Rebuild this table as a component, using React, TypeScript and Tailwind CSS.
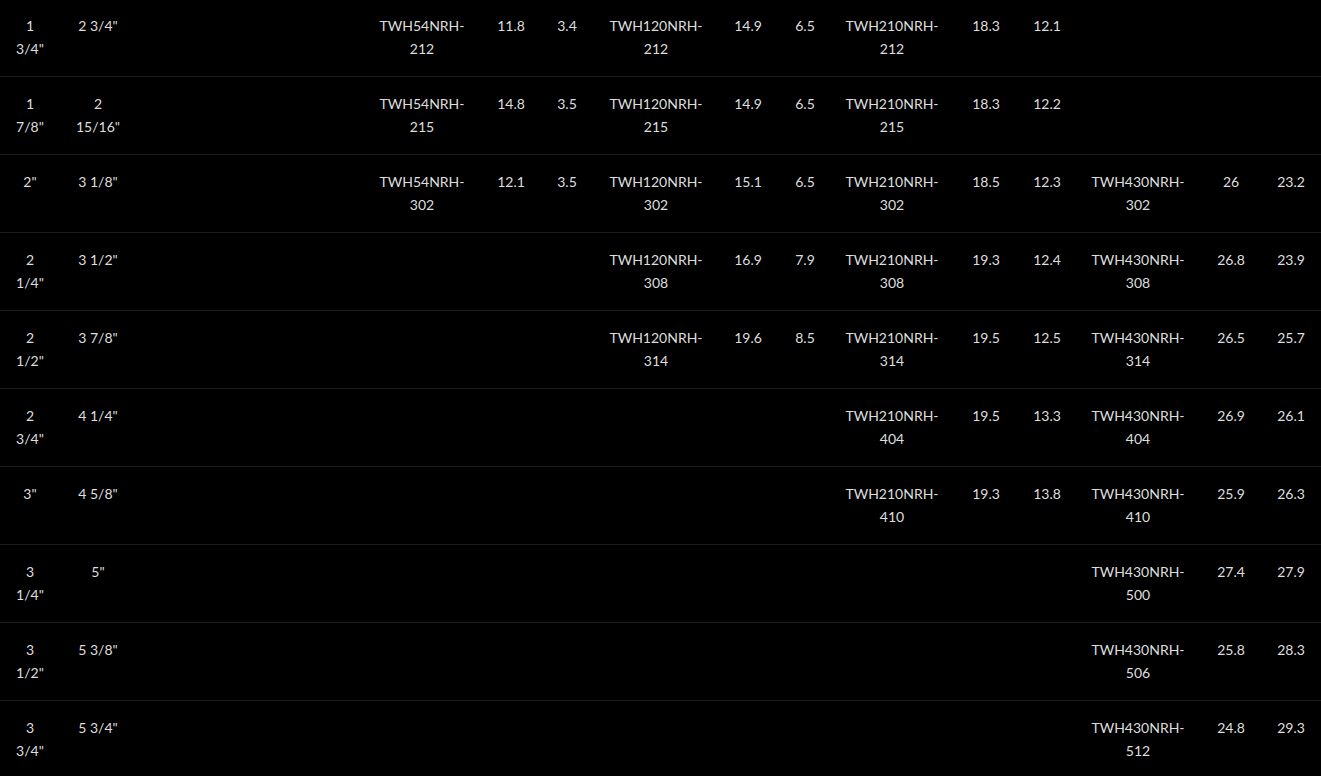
import React from "react";

type Row = string[];

const colClasses = [
  "w-[60px]",
  "w-[76px]",
  "w-[75px]",
  "w-[75px]",
  "w-[75px]",
  "w-[122px]",
  "w-[56px]",
  "w-[56px]",
  "w-[122px]",
  "w-[62px]",
  "w-[52px]",
  "w-[122px]",
  "w-[66px]",
  "w-[56px]",
  "w-[126px]",
  "w-[60px]",
  "w-[60px]",
];

const rows: Row[] = [
  ["1\n3/4\"", "2 3/4\"", "", "", "", "TWH54NRH-\n212", "11.8", "3.4", "TWH120NRH-\n212", "14.9", "6.5", "TWH210NRH-\n212", "18.3", "12.1", "", "", ""],
  ["1\n7/8\"", "2\n15/16\"", "", "", "", "TWH54NRH-\n215", "14.8", "3.5", "TWH120NRH-\n215", "14.9", "6.5", "TWH210NRH-\n215", "18.3", "12.2", "", "", ""],
  ["2\"", "3 1/8\"", "", "", "", "TWH54NRH-\n302", "12.1", "3.5", "TWH120NRH-\n302", "15.1", "6.5", "TWH210NRH-\n302", "18.5", "12.3", "TWH430NRH-\n302", "26", "23.2"],
  ["2\n1/4\"", "3 1/2\"", "", "", "", "", "", "", "TWH120NRH-\n308", "16.9", "7.9", "TWH210NRH-\n308", "19.3", "12.4", "TWH430NRH-\n308", "26.8", "23.9"],
  ["2\n1/2\"", "3 7/8\"", "", "", "", "", "", "", "TWH120NRH-\n314", "19.6", "8.5", "TWH210NRH-\n314", "19.5", "12.5", "TWH430NRH-\n314", "26.5", "25.7"],
  ["2\n3/4\"", "4 1/4\"", "", "", "", "", "", "", "", "", "", "TWH210NRH-\n404", "19.5", "13.3", "TWH430NRH-\n404", "26.9", "26.1"],
  ["3\"", "4 5/8\"", "", "", "", "", "", "", "", "", "", "TWH210NRH-\n410", "19.3", "13.8", "TWH430NRH-\n410", "25.9", "26.3"],
  ["3\n1/4\"", "5\"", "", "", "", "", "", "", "", "", "", "", "", "", "TWH430NRH-\n500", "27.4", "27.9"],
  ["3\n1/2\"", "5 3/8\"", "", "", "", "", "", "", "", "", "", "", "", "", "TWH430NRH-\n506", "25.8", "28.3"],
  ["3\n3/4\"", "5 3/4\"", "", "", "", "", "", "", "", "", "", "", "", "", "TWH430NRH-\n512", "24.8", "29.3"],
];

function Cell({ text }: { text: string }) {
  const parts = text.split("\n");
  return (
    <td className="align-top text-center pt-[15px] pb-[16px] px-0 border-b border-[#1c1c1c] whitespace-nowrap">
      {parts.map((p, i) => (
        <React.Fragment key={i}>
          {i > 0 && <br />}
          {p}
        </React.Fragment>
      ))}
    </td>
  );
}

export default function App() {
  return (
    <div className="w-[1321px] h-[776px] overflow-hidden bg-black text-[#dedede] text-[14px] leading-[23px] font-['Lato','Noto_Sans',sans-serif]">
      <table className="table-fixed border-collapse w-[1321px] -mt-[1px]">
        <colgroup>
          {colClasses.map((c, i) => (
            <col key={i} className={c} />
          ))}
        </colgroup>
        <tbody>
          {rows.map((r, i) => (
            <tr key={i}>
              {r.map((c, j) => (
                <Cell key={j} text={c} />
              ))}
            </tr>
          ))}
        </tbody>
      </table>
    </div>
  );
}
